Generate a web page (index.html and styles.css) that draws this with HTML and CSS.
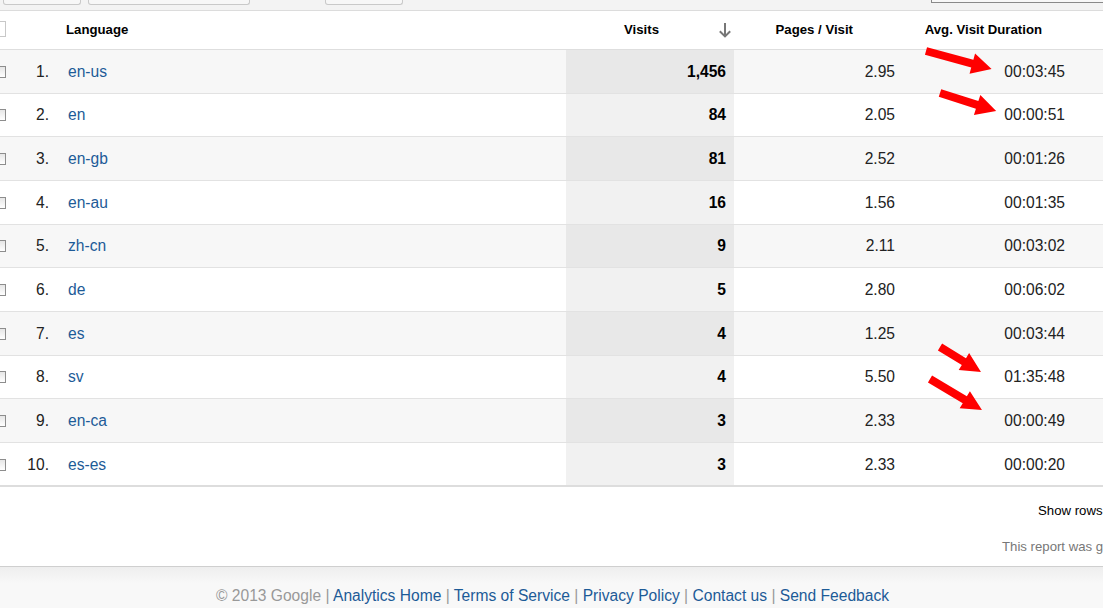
FILE: index.html
```html
<!DOCTYPE html>
<html>
<head>
<meta charset="utf-8">
<link rel="stylesheet" href="styles.css">
</head>
<body>
<div class="page">
  <div class="topbar">
    <div class="tb-btn w1"></div>
    <div class="tb-btn w2"></div>
    <div class="tb-btn w3"></div>
    <div class="tb-spacer"></div>
    <div class="tb-input"></div>
  </div>

  <div class="table">
    <div class="row head">
      <div class="c c-check"><span class="hcheck"></span></div>
      <div class="c c-num"></div>
      <div class="c c-lang">Language</div>
      <div class="c c-visits h-visits"><span>Visits</span>
        <svg class="sort" width="14" height="16" viewBox="0 0 14 16"><path d="M7 1V14.5" stroke="#777" stroke-width="2" fill="none"/><path d="M1.8 9.2L7 14.4L12.2 9.2" stroke="#777" stroke-width="2" fill="none"/></svg>
      </div>
      <div class="c c-pages h-pages">Pages / Visit</div>
      <div class="c c-dur h-dur">Avg. Visit Duration</div>
    </div>

    <div class="row odd"><div class="c c-check"><span class="cb"></span></div><div class="c c-num">1.</div><div class="c c-lang"><a>en-us</a></div><div class="c c-visits">1,456</div><div class="c c-pages">2.95</div><div class="c c-dur">00:03:45</div></div>
    <div class="row"><div class="c c-check"><span class="cb"></span></div><div class="c c-num">2.</div><div class="c c-lang"><a>en</a></div><div class="c c-visits">84</div><div class="c c-pages">2.05</div><div class="c c-dur">00:00:51</div></div>
    <div class="row odd"><div class="c c-check"><span class="cb"></span></div><div class="c c-num">3.</div><div class="c c-lang"><a>en-gb</a></div><div class="c c-visits">81</div><div class="c c-pages">2.52</div><div class="c c-dur">00:01:26</div></div>
    <div class="row"><div class="c c-check"><span class="cb"></span></div><div class="c c-num">4.</div><div class="c c-lang"><a>en-au</a></div><div class="c c-visits">16</div><div class="c c-pages">1.56</div><div class="c c-dur">00:01:35</div></div>
    <div class="row odd"><div class="c c-check"><span class="cb"></span></div><div class="c c-num">5.</div><div class="c c-lang"><a>zh-cn</a></div><div class="c c-visits">9</div><div class="c c-pages">2.11</div><div class="c c-dur">00:03:02</div></div>
    <div class="row"><div class="c c-check"><span class="cb"></span></div><div class="c c-num">6.</div><div class="c c-lang"><a>de</a></div><div class="c c-visits">5</div><div class="c c-pages">2.80</div><div class="c c-dur">00:06:02</div></div>
    <div class="row odd"><div class="c c-check"><span class="cb"></span></div><div class="c c-num">7.</div><div class="c c-lang"><a>es</a></div><div class="c c-visits">4</div><div class="c c-pages">1.25</div><div class="c c-dur">00:03:44</div></div>
    <div class="row"><div class="c c-check"><span class="cb"></span></div><div class="c c-num">8.</div><div class="c c-lang"><a>sv</a></div><div class="c c-visits">4</div><div class="c c-pages">5.50</div><div class="c c-dur">01:35:48</div></div>
    <div class="row odd"><div class="c c-check"><span class="cb"></span></div><div class="c c-num">9.</div><div class="c c-lang"><a>en-ca</a></div><div class="c c-visits">3</div><div class="c c-pages">2.33</div><div class="c c-dur">00:00:49</div></div>
    <div class="row last"><div class="c c-check"><span class="cb"></span></div><div class="c c-num">10.</div><div class="c c-lang"><a>es-es</a></div><div class="c c-visits">3</div><div class="c c-pages">2.33</div><div class="c c-dur">00:00:20</div></div>
  </div>

  <div class="tools">
    <div class="showrows">Show rows:</div>
    <div class="generated">This report was generated</div>
  </div>

  <div class="footer">
    <span class="muted">© 2013 Google</span> <span class="sep">|</span> <a>Analytics Home</a> <span class="sep">|</span> <a>Terms of Service</a> <span class="sep">|</span> <a>Privacy Policy</a> <span class="sep">|</span> <a>Contact us</a> <span class="sep">|</span> <a>Send Feedback</a>
  </div>

  <svg class="annot" width="1103" height="608" viewBox="0 0 1103 608">
    <polygon fill="#ff0000" transform="translate(926 51) rotate(15.3)" points="0,-4 48,-4 48,-10.5 68,0 48,10.5 48,4 0,4"/>
    <polygon fill="#ff0000" transform="translate(940 93) rotate(17.8)" points="0,-4 39,-4 39,-10.5 59,0 39,10.5 39,4 0,4"/>
    <polygon fill="#ff0000" transform="translate(940 347) rotate(31.4)" points="0,-4 28,-4 28,-10 48,0 28,10 28,4 0,4"/>
    <polygon fill="#ff0000" transform="translate(930 379) rotate(30.8)" points="0,-4 40.5,-4 40.5,-10 60.5,0 40.5,10 40.5,4 0,4"/>
  </svg>
</div>
</body>
</html>
```

FILE: styles.css
```css
html, body {
  margin: 0;
  padding: 0;
  background: #ffffff;
  overflow: hidden;
}
body {
  font-family: "Liberation Sans", Arial, sans-serif;
  color: #222;
}
.page {
  position: relative;
  width: 1103px;
  height: 608px;
  overflow: hidden;
  display: flex;
  flex-direction: column;
}

/* top strip */
.topbar {
  height: 10px;
  background: #f3f3f3;
  border-bottom: 1px solid #dcdcdc;
  display: flex;
  align-items: flex-start;
  padding-left: 3px;
  gap: 7px;
  flex-shrink: 0;
}
.tb-btn {
  height: 4px;
  border: 1px solid #c9c9c9;
  border-top: none;
  border-radius: 0 0 3px 3px;
  background: #f7f7f7;
}
.w1 { width: 76px; }
.w2 { width: 160px; }
.w3 { width: 76px; margin-left: 68px; }
.tb-spacer { flex: 1; }
.tb-input {
  width: 171px;
  height: 2px;
  border: 1px solid #8a8a8a;
  border-top: none;
  border-right: none;
  background: #f8f8f8;
}

/* table */
.table {
  display: flex;
  flex-direction: column;
  flex-shrink: 0;
}
.row {
  display: grid;
  grid-template-columns: 20px 29px 517px 168px 171px 198px;
  height: 43.67px;
  border-bottom: 1px solid #e2e2e2;
  background: #ffffff;
  font-size: 15.6px;
  box-sizing: border-box;
}
.row.odd { background: #f7f7f7; }
.row.last { border-bottom: 2px solid #dddddd; height: 44.3px; }
.row.head {
  height: 39px;
  font-size: 13.2px;
  font-weight: bold;
  color: #000;
  border-bottom: 1px solid #dedede;
}
.c {
  display: flex;
  align-items: center;
  white-space: nowrap;
  padding-top: 1px;
}
.row.head .c { padding-top: 0; padding-bottom: 2px; }
.c-check { justify-content: flex-start; }
.cb {
  display: block;
  width: 10px;
  height: 10px;
  margin-left: -6px;
  border: 1px solid #8d8d8d;
  background: linear-gradient(#e6e6e6, #ffffff);
}
.hcheck {
  display: block;
  width: 14px;
  height: 14px;
  margin-left: -10px;
  border: 1px solid #c8c8c8;
  background: #fff;
}
.c-num { justify-content: flex-end; color: #222; }
.c-lang { padding-left: 19px; }
.row.head .c-lang { padding-left: 17px; }
.c-lang a { color: #1d5b97; text-decoration: none; }
.c-visits {
  justify-content: flex-end;
  padding-right: 8px;
  font-weight: bold;
  color: #000;
  background: #f1f1f1;
}
.row.odd .c-visits { background: #e8e8e8; }
.row.head .c-visits { background: transparent; }
.c-pages { justify-content: flex-end; padding-right: 10px; }
.c-dur { justify-content: flex-end; padding-right: 38px; }

.h-visits { padding-right: 2px; gap: 59px; }
.sort { display: block; margin-top: 2px; }
.h-pages { padding-right: 52px; }
.h-dur { padding-right: 61px; }

/* tools under table */
.tools {
  height: 79px;
  font-size: 13.2px;
  flex-shrink: 0;
}
.showrows {
  padding-left: 1038px;
  padding-top: 16px;
  line-height: 16px;
  color: #000;
  white-space: nowrap;
}
.generated {
  padding-left: 1002px;
  padding-top: 20px;
  line-height: 16px;
  color: #777;
  white-space: nowrap;
}

/* footer */
.footer {
  flex: 1;
  border-top: 1px solid #cfcfcf;
  background: linear-gradient(#eeeeee, #f8f8f8 40%, #f8f8f8);
  text-align: center;
  font-size: 15.6px;
  line-height: 18px;
  padding-top: 20px;
  padding-left: 2px;
  color: #999;
  white-space: nowrap;
}
.footer a { color: #1d5b97; text-decoration: none; }
.footer .muted { color: #999; }
.footer .sep { color: #999; }

.annot {
  position: absolute;
  left: 0;
  top: 0;
  pointer-events: none;
}
```
